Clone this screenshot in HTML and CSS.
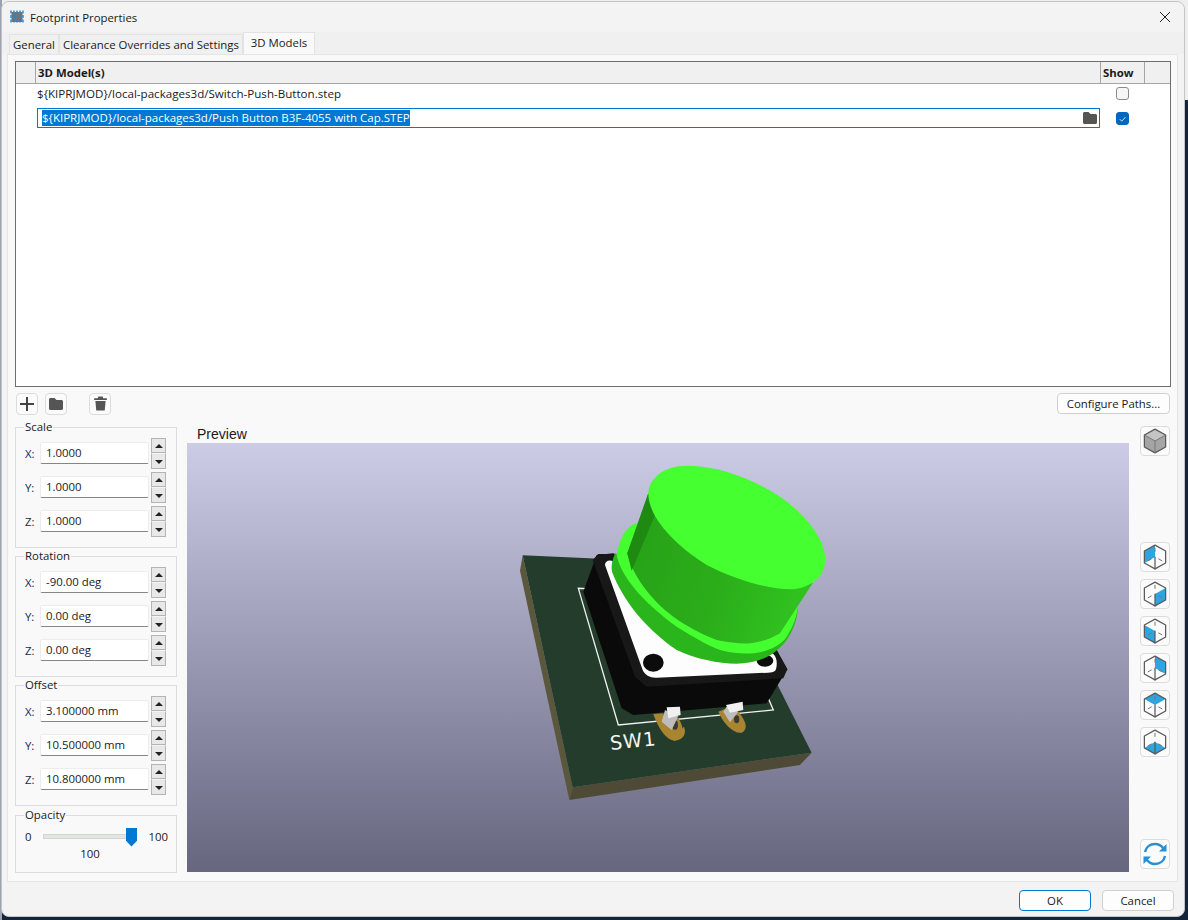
FILE: index.html
```html
<!DOCTYPE html>
<html lang="en">
<head>
<meta charset="utf-8">
<title>Footprint Properties</title>
<link rel="stylesheet" href="styles.css">
</head>
<body>
<svg class="defs" width="0" height="0" aria-hidden="true">
  <defs>
    <g id="cube-lines" fill="none" stroke="#5a5a5a" stroke-width="1" stroke-linejoin="round">
      <path d="M12 2.500 20.500 7.200V16.800L12 21.500 3.500 16.800V7.200Z"/>
    </g>
    <g id="cube-inner" fill="none" stroke-linecap="round">
      <path d="M12 12V21.500" stroke="#5a5a5a" stroke-width="1"/>
      <path d="M12 5V7.500M6.500 15 9 13.600M15 13.600 17.500 15" stroke="#777" stroke-width=".8"/>
    </g>
    <path id="folder" d="M1 3.500C1 2.700 1.700 2 2.500 2H6.500L8.500 4H13.500C14.300 4 15 4.700 15 5.500V12.500C15 13.300 14.300 14 13.500 14H2.500C1.700 14 1 13.300 1 12.500Z" fill="#555"/>
  </defs>
</svg>
<div class="window">
  <header class="titlebar">
    <svg class="app-icon" viewBox="0 0 16 16" width="16" height="16"><rect x="2.500" y="3" width="11" height="10" fill="#6f747b"/><path d="M2 1.500V14.500M5 1.500V14.500M8 1.500V14.500M11 1.500V14.500M14 1.500V14.500" stroke="#2d86c5" stroke-width="1.400" stroke-dasharray="3 1.500"/></svg>
    <span class="title">Footprint Properties</span>
    <svg class="close" viewBox="0 0 10 10" width="10" height="10"><path d="M0 0 10 10M10 0 0 10" stroke="#222" stroke-width="1"/></svg>
  </header>
  <nav class="tabs">
    <span class="tab general">General</span>
    <span class="tab clearance">Clearance Overrides and Settings</span>
    <span class="tab active">3D Models</span>
  </nav>
  <main class="panel">
    <section class="grid">
      <div class="grid-head">
        <div class="hcell corner"></div>
        <div class="hcell model">3D Model(s)</div>
        <div class="hcell show">Show</div>
      </div>
      <div class="grid-row first">
        <div class="cell-text">${KIPRJMOD}/local-packages3d/Switch-Push-Button.step</div>
        <div class="cell-check"><span class="check"></span></div>
      </div>
      <div class="grid-row second">
        <div class="cell-edit"><span class="selected">${KIPRJMOD}/local-packages3d/Push Button B3F-4055 with Cap.STEP</span>
          <svg class="edit-folder" viewBox="0 0 16 16" width="16" height="16"><use href="#folder"/></svg>
        </div>
        <div class="cell-check"><span class="check on"><svg viewBox="0 0 12 12" width="12" height="12"><path d="M3 6.200 5.200 8.400 9.200 4" fill="none" stroke="#dfe9f5" stroke-width="1"/></svg></span></div>
      </div>
    </section>
    <div class="toolbar">
      <button class="tool"><svg viewBox="0 0 16 16" width="16" height="16"><path d="M8 1V15M1 8H15" stroke="#444" stroke-width="2"/></svg></button>
      <button class="tool"><svg viewBox="0 0 16 16" width="16" height="16"><use href="#folder"/></svg></button>
      <button class="tool gap"><svg viewBox="0 0 16 16" width="17" height="17"><path d="M6 1.500H10L10.600 3H14V4.600H2V3H5.400ZM3.200 5.600H12.800L12 14.500H4Z" fill="#555"/></svg></button>
      <button class="config">Configure Paths...</button>
    </div>
    <div class="lower">
      <aside class="side">
        <fieldset class="group triple">
          <legend>Scale</legend>
          <div class="row"><label>X:</label><span class="input">1.0000</span><span class="spin"><i class="up"></i><i class="down"></i></span></div>
          <div class="row"><label>Y:</label><span class="input">1.0000</span><span class="spin"><i class="up"></i><i class="down"></i></span></div>
          <div class="row"><label>Z:</label><span class="input">1.0000</span><span class="spin"><i class="up"></i><i class="down"></i></span></div>
        </fieldset>
        <fieldset class="group triple">
          <legend>Rotation</legend>
          <div class="row"><label>X:</label><span class="input">-90.00 deg</span><span class="spin"><i class="up"></i><i class="down"></i></span></div>
          <div class="row"><label>Y:</label><span class="input">0.00 deg</span><span class="spin"><i class="up"></i><i class="down"></i></span></div>
          <div class="row"><label>Z:</label><span class="input">0.00 deg</span><span class="spin"><i class="up"></i><i class="down"></i></span></div>
        </fieldset>
        <fieldset class="group triple">
          <legend>Offset</legend>
          <div class="row"><label>X:</label><span class="input">3.100000 mm</span><span class="spin"><i class="up"></i><i class="down"></i></span></div>
          <div class="row"><label>Y:</label><span class="input">10.500000 mm</span><span class="spin"><i class="up"></i><i class="down"></i></span></div>
          <div class="row"><label>Z:</label><span class="input">10.800000 mm</span><span class="spin"><i class="up"></i><i class="down"></i></span></div>
        </fieldset>
        <fieldset class="group opacity">
          <legend>Opacity</legend>
          <div class="slider-row">
            <span>0</span>
            <span class="track"><span class="thumb"></span></span>
            <span>100</span>
          </div>
          <div class="slider-value">100</div>
        </fieldset>
      </aside>
      <section class="preview">
        <div class="preview-label">Preview</div>
        <div class="canvas">
          <svg class="scene" viewBox="0 0 942 429" width="942" height="429">
            <defs>
              <linearGradient id="cyl" x1="0" y1="0" x2="1" y2="0.25">
                <stop offset="0" stop-color="#27a017"/><stop offset="0.6" stop-color="#2bad1a"/><stop offset="1" stop-color="#30c01f"/>
              </linearGradient>
            </defs>
            <g transform="translate(313 7) scale(0.3333)">
              <polygon points="68,316 60,362 208,1050 218,1012" fill="#5a573c"/>
              <polygon points="218,1012 208,1050 900,945 935,908" fill="#4e4a36"/>
              <polygon points="68,316 650,342 935,908 218,1012" fill="#243c2b"/>
              <polyline points="262,416 235,415 355,825 820,780 805,745" fill="none" stroke="#f2f2f2" stroke-width="4"/>
              <path d="M460,792 L490,790 C500,830 510,850 525,858 L552,830 C560,850 552,868 525,872 C500,872 475,835 460,792Z" fill="#a98532"/>
              <path d="M480,800 L535,805 C552,830 555,860 525,872 C500,865 485,830 480,800Z" fill="#a98532"/>
              <path d="M655,785 L680,775 L715,785 C735,810 748,835 725,848 C700,852 670,820 655,785Z" fill="#a98532"/>
              <ellipse cx="525" cy="825" rx="9" ry="14" fill="#3c3a30"/>
              <ellipse cx="710" cy="808" rx="8" ry="12" fill="#3c3a30"/>
              <polygon points="250,425 290,315 340,310 830,600 862,658 800,760 400,795 365,775" fill="#0a0a0a"/>
              <polygon points="278,330 295,312 340,312 830,600 862,658 850,685 440,710 405,680" fill="#181818"/>
              <path d="M315,345 C315,332 330,328 340,335 L820,612 C830,620 833,640 828,658 C825,666 815,668 805,668 L470,683 C450,684 435,675 428,660Z" fill="#fdfdfd"/>
              <ellipse cx="460" cy="638" rx="31" ry="27" fill="#0c0c0c"/>
              <ellipse cx="795" cy="632" rx="25" ry="18" fill="#0c0c0c"/>
              <polygon points="495,780 485,815 515,840 535,798" fill="#bdbdbd"/>
              <polygon points="500,772 540,770 542,795 505,805" fill="#f0f0f0"/>
              <polygon points="670,785 680,770 715,785 690,817" fill="#bdbdbd"/>
              <polygon points="678,765 728,755 730,780 690,788" fill="#f0f0f0"/>
              <path d="M345,310 C336,335 332,350 337,368 C370,450 430,530 530,600 C590,630 680,645 730,640 C790,635 830,610 860,570 C880,540 892,510 893,475Z" fill="#2bb51c"/>
              <path d="M405,220 C375,235 358,270 350,315 C362,375 420,450 530,530 C580,560 620,585 660,600 C700,610 730,612 760,610 C800,605 835,590 855,568 C875,540 888,510 893,475 L700,300Z" fill="#45fe2f"/>
              <path d="M445,130 L382,310 C395,370 450,450 520,500 C560,528 600,550 650,570 C690,578 720,582 750,580 C790,575 815,565 840,550 L938,400Z" fill="url(#cyl)"/>
              <polygon points="445,130 465,195 395,362 382,310" fill="#1e8a12"/>
              <path d="M445,130 C445,100 470,68 510,55 C560,40 620,50 680,65 C760,90 840,130 900,190 C950,240 980,290 975,340 C970,385 930,412 880,418 C800,420 700,385 620,345 C540,295 445,210 445,130Z" fill="#45ff30"/>
              <text class="silk" x="0" y="0" transform="translate(332 900) rotate(-6)">SW1</text>
            </g>
          </svg>
        </div>
      </section>
      <aside class="views">
        <button class="view first-view"><svg viewBox="0 0 24 24" width="30" height="30"><path d="M12 2.500 20.500 7.200V16.800L12 21.500 3.500 16.800V7.200Z" fill="#a5a5a5"/><path d="M12 2.500 20.500 7.200 12 12 3.500 7.200Z" fill="#c4c4c4"/><use href="#cube-lines"/><path d="M3.500 7.200 12 12 20.500 7.200M12 12V21.500" fill="none" stroke="#777" stroke-width=".8"/></svg></button>
        <div class="view-stack">
          <button class="view"><svg viewBox="0 0 24 24" width="30" height="30"><path d="M12 2.500V12L3.500 16.800V7.200Z" fill="#2ba6e0"/><use href="#cube-lines"/><use href="#cube-inner"/></svg></button>
          <button class="view"><svg viewBox="0 0 24 24" width="30" height="30"><path d="M12 12 20.500 7.200V16.800L12 21.500Z" fill="#2ba6e0"/><use href="#cube-lines"/><use href="#cube-inner"/></svg></button>
          <button class="view"><svg viewBox="0 0 24 24" width="30" height="30"><path d="M3.500 7.200 12 12V21.500L3.500 16.800Z" fill="#2ba6e0"/><use href="#cube-lines"/><use href="#cube-inner"/></svg></button>
          <button class="view"><svg viewBox="0 0 24 24" width="30" height="30"><path d="M12 2.500 20.500 7.200V16.800L12 12Z" fill="#2ba6e0"/><use href="#cube-lines"/><use href="#cube-inner"/></svg></button>
          <button class="view"><svg viewBox="0 0 24 24" width="30" height="30"><path d="M12 2.500 20.500 7.200 12 12 3.500 7.200Z" fill="#2ba6e0"/><use href="#cube-lines"/><use href="#cube-inner"/></svg></button>
          <button class="view"><svg viewBox="0 0 24 24" width="30" height="30"><path d="M3.500 16.800 12 12 20.500 16.800 12 21.500Z" fill="#2ba6e0"/><use href="#cube-lines"/><use href="#cube-inner"/></svg></button>
        </div>
        <button class="view refresh"><svg viewBox="0 0 26 26" width="26" height="26"><path d="M3 11C4 6 8 3 13 3C16.500 3 19.500 4.700 21.500 7.500" fill="none" stroke="#2a8fd0" stroke-width="2.400"/><path d="M24.500 3V10.500H17Z" fill="#2a8fd0"/><path d="M23 15C22 20 18 23 13 23C9.500 23 6.500 21.300 4.500 18.500" fill="none" stroke="#2a8fd0" stroke-width="2.400"/><path d="M1.500 23V15.500H9Z" fill="#2a8fd0"/></svg></button>
      </aside>
    </div>
  </main>
  <footer class="footer">
    <button class="btn primary">OK</button>
    <button class="btn">Cancel</button>
  </footer>
</div>
</body>
</html>
```

FILE: styles.css
```css
* { box-sizing: border-box; }
html, body { margin: 0; padding: 0; }
body {
  width: 1188px;
  height: 920px;
  overflow: hidden;
  background:
    linear-gradient(#9aa3b2, #9aa3b2) left top / 2px 100% no-repeat,
    linear-gradient(#eeeeee 0 100px, #14243a 100px);
  font-family: "Open Sans", "Noto Sans", sans-serif;
  font-size: 11.4px;
  color: #1a1a1a;
}
.defs { position: absolute; }
.window {
  margin: 1px 0 0 1px;
  width: 1184px;
  height: 916px;
  background: #f3f3f3;
  border: 1px solid #c4c4c4;
  border-radius: 8px;
  display: flex;
  flex-direction: column;
}
.titlebar {
  height: 30px;
  display: flex;
  align-items: center;
  padding: 0 14px 0 7px;
  background: #f3f3f3;
  border-radius: 8px 8px 0 0;
}
.app-icon { margin-right: 5px; }
.title { flex: 1; }
.tabs {
  height: 22px;
  display: flex;
  align-items: flex-end;
  padding-left: 7px;
  background: #f0f0f0;
}
.tab {
  height: 20px;
  line-height: 19px;
  text-align: center;
  background: #f0f0f0;
  border: 1px solid #e3e3e3;
  border-bottom: 0;
  white-space: nowrap;
}
.general { width: 50px; }
.clearance { width: 184px; }
.tab.active { width: 72px; height: 22px; line-height: 20px; background: #f9f9f9; }
.panel {
  margin: 0 5px;
  width: 1171px;
  height: 828px;
  background: #f9f9f9;
  border: 1px solid #e5e5e5;
  padding: 6px 7px 0 7px;
  display: flex;
  flex-direction: column;
}
.grid {
  width: 1156px;
  height: 326px;
  border: 1px solid #6e6e6e;
  background: #fff;
  flex: none;
}
.grid-head { display: flex; height: 22px; background: #f0f0f0; border-bottom: 1px solid #a5a5a5; }
.hcell { font-weight: 700; border-right: 1px solid #a5a5a5; line-height: 21px; padding-left: 2px; }
.corner { width: 20px; }
.model { width: 1065px; }
.show { width: 44px; padding-left: 2px; }
.grid-row { display: flex; align-items: center; font-size: 11.600px; }
.first { height: 20px; padding-bottom: 2px; }
.second { height: 28px; font-size: 11.500px; }
.cell-text { width: 1084px; padding-left: 21px; }
.cell-edit {
  margin-left: 21px;
  width: 1063px;
  height: 20px;
  border: 1px solid #0078d4;
  display: flex;
  align-items: center;
  justify-content: space-between;
  padding: 0 1px 0 4px;
  background: #fff;
}
.selected { background: #0078d4; color: #fff; line-height: 16px; }
.cell-check { width: 44px; display: flex; justify-content: center; }
.check {
  width: 13px;
  height: 13px;
  border: 1px solid #8a8a8a;
  border-radius: 3px;
  background: #f6f6f6;
  display: flex;
}
.check.on { background: #0067c0; border-color: #0067c0; }
.toolbar { height: 32px; flex: none; display: flex; align-items: center; padding-top: 1px; }
.tool {
  width: 22px;
  height: 22px;
  padding: 0;
  margin: 0 7px 0 0;
  background: #fbfbfb;
  border: 1px solid #dcdcdc;
  border-radius: 4px;
  display: flex;
  align-items: center;
  justify-content: center;
}
.tool:first-child { margin-left: 1px; }
.tool.gap { margin-left: 15px; }
.config {
  margin-left: auto;
  width: 113px;
  height: 21px;
  padding: 0;
  font: inherit;
  color: inherit;
  background: #fdfdfd;
  border: 1px solid #d0d0d0;
  border-radius: 4px;
}
.lower { flex: 1; display: flex; min-height: 0; padding-top: 1px; }
.side { width: 162px; flex: none; display: flex; flex-direction: column; gap: 1.500px; }
.group {
  margin: 0;
  padding: 2px 0 0 9px;
  border: 1px solid #dcdcdc;
  min-width: 0;
}
.group legend { padding: 0 1px; margin-left: -1px; line-height: 14px; }
.triple { height: 127.500px; }
.opacity { height: 65px; margin-top: 1px; padding-top: 3px; }
.row { display: flex; align-items: center; height: 34px; }
.row label { width: 15px; color: #1a2a4a; }
.input {
  width: 109px;
  height: 22px;
  line-height: 20px;
  padding-left: 5px;
  background: #fff;
  border: 1px solid #ececec;
  border-bottom: 1px solid #868686;
  border-radius: 2px;
}
.spin { margin-left: 2px; width: 15px; height: 31px; display: flex; flex-direction: column; }
.spin i { flex: 1; background: #e8e8e8; position: relative; display: block; border: 1px solid #b4b4b4; }
.spin .down { border-top-color: #f4f4f4; }
.spin i::after {
  content: "";
  position: absolute;
  left: 2.500px;
  top: 5px;
  border-left: 4px solid transparent;
  border-right: 4px solid transparent;
}
.spin .up::after { border-bottom: 4px solid #222; }
.spin .down::after { border-top: 4px solid #222; top: 6px; }
.slider-row { display: flex; align-items: center; justify-content: space-between; height: 22px; padding-right: 8px; }
.track { width: 94px; height: 5px; background: #e4e6e4; border: 1px solid #d4d4d4; position: relative; }
.thumb {
  position: absolute;
  right: -1px;
  top: -7px;
  width: 11px;
  height: 19px;
  background: #0078d4;
  clip-path: polygon(0 0, 100% 0, 100% 70%, 50% 100%, 0 70%);
}
.slider-value { width: 151px; text-align: center; padding-right: 5px; line-height: 14px; margin-left: -8px; }
.preview { flex: none; width: 942px; margin-left: 10px; display: flex; flex-direction: column; }
.preview-label { height: 23px; font-size: 14px; line-height: 28px; padding-left: 10px; font-family: "Liberation Sans", sans-serif; }
.canvas { height: 429px; background: linear-gradient(#cccce6, #66667f); overflow: hidden; }
.scene { display: block; }
.silk { font-family: "DejaVu Sans", sans-serif; font-size: 58px; fill: #f4f4f4; letter-spacing: 3px; }
.views { width: 30px; margin-left: 11px; display: flex; flex-direction: column; flex: none; padding-top: 6px; }
.view {
  width: 30px;
  height: 30px;
  padding: 0;
  background: #fbfbfb;
  border: 1px solid #dcdcdc;
  border-radius: 4px;
  display: flex;
  align-items: center;
  justify-content: center;
  flex: none;
}
.view svg { flex: none; }
.view-stack { margin-top: 86px; display: flex; flex-direction: column; gap: 7px; }
.refresh { margin-top: 82px; }
.footer { height: 33px; display: flex; justify-content: flex-end; align-items: center; gap: 11px; padding: 3px 10px 0 0; }
.btn { width: 72px; height: 21px; padding: 0; font: inherit; color: inherit; background: #fdfdfd; border: 1px solid #d0d0d0; border-radius: 4px; }
.btn.primary { border: 1px solid #0078d4; }
```
